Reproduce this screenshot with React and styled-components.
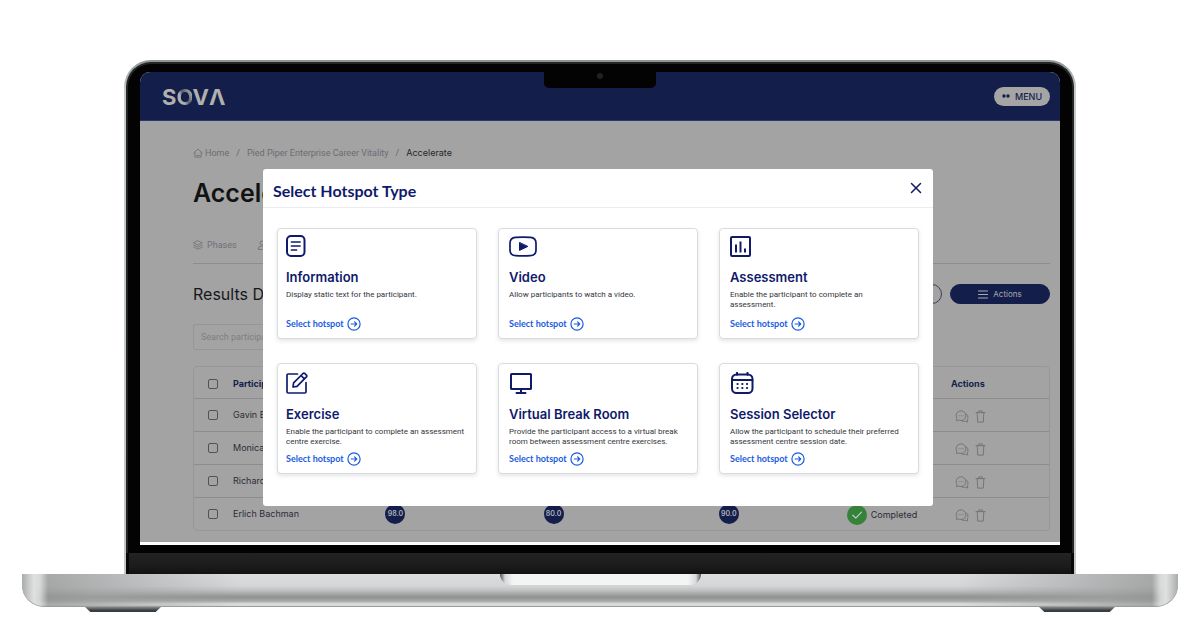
import React from "react";
import styled, { createGlobalStyle } from "styled-components";

const Global = createGlobalStyle`
  *, *::before, *::after { box-sizing: border-box; }
  body { margin: 0; background: #fff; font-family: Roboto, sans-serif; }
  button, input { font: inherit; color: inherit; margin: 0; }
  button { cursor: pointer; }
  h1, h2, h3, p { margin: 0; }
  svg { display: block; flex: none; }
`;

const heading = `font-family: Inter, sans-serif;`;

const Page = styled.main`
  padding: 60px 22px 4px;
`;
const Lid = styled.div`
  margin: 0 102px;
  padding: 2px;
  border-radius: 27px 27px 0 0;
  background: linear-gradient(#8f9392, #c9cccd 30px, #c4c6c8);
  padding-bottom: 0;
`;
const Bezel = styled.div`
  padding: 8px 12px;
  border: 2px solid #242626;
  border-bottom: 0;
  border-radius: 25px 25px 0 0;
  background: #030303;
`;
const Chin = styled.div`
  height: 21px;
  border: solid #080808;
  border-width: 0 3px;
  background: linear-gradient(#232323, #1b1c1b 60%, #121210);
`;
const Screen = styled.div`
  position: relative;
  padding-bottom: 3px;
  border-radius: 10px 10px 0 0;
  overflow: hidden;
  background: #fff;
`;
const Notch = styled.div`
  position: absolute;
  top: 0;
  left: 50%;
  transform: translateX(-50%);
  display: flex;
  justify-content: center;
  width: 112px;
  height: 16px;
  padding-top: 1px;
  border-radius: 0 0 5px 5px;
  background: #030303;
`;
const Camera = styled.span`
  width: 6px;
  height: 6px;
  border-radius: 50%;
  background: #1d2226;
`;

const Base = styled.div`
  display: flex;
  justify-content: center;
  height: 33px;
  border-bottom: 1px solid #9b9d9d;
  border-radius: 0 0 22px 22px;
  background:
    linear-gradient(90deg, #a9abab 0, #c6c8c8 6px, #dfe1e1 12px, rgba(215, 217, 217, 0.9) 18px, rgba(150, 152, 152, 0.75) 26px, rgba(160, 162, 162, 0.7) 70px, rgba(190, 192, 194, 0) 220px, rgba(190, 192, 194, 0) calc(100% - 220px), rgba(160, 162, 162, 0.7) calc(100% - 70px), rgba(150, 152, 152, 0.75) calc(100% - 26px), rgba(215, 217, 217, 0.9) calc(100% - 18px), #dfe1e1 calc(100% - 12px), #c6c8c8 calc(100% - 6px), #a9abab 100%),
    linear-gradient(#dcddde 0, #d3d5d7 12px, #bcbebe 17px, #8f9191 23px, #a5a7a7 27px, #dedfdf 30px, #cfd1d1 33px);
`;
const Lip = styled.div`
  width: 201px;
  height: 11px;
  border-radius: 0 0 11px 11px;
  background: linear-gradient(90deg, #4e5052, #d7d8d8 5px, #f3f5f5 13px, #f3f5f5 calc(100% - 13px), #d7d8d8 calc(100% - 5px), #4e5052);
`;
const Feet = styled.div`
  display: flex;
  justify-content: space-between;
  padding: 0 63px;
`;
const Foot = styled.span`
  width: 76px;
  height: 5px;
  background: linear-gradient(#858989, #3a3d42 70%);
  clip-path: polygon(0 0, 100% 0, 93% 100%, 7% 100%);
`;

const TopBar = styled.header`
  display: flex;
  align-items: center;
  justify-content: space-between;
  height: 49px;
  padding: 0 10px 0 22px;
  border-bottom: 1px solid #2c3767;
  background: #131e4a;
`;
const Logo = styled.a`
  ${heading}
  padding-top: 2px;
  color: #b0b0ac;
  font-size: 22px;
  line-height: 24px;
  font-weight: 700;
  text-decoration: none;
`;
const LogoRing = styled.span`
  background: linear-gradient(60deg, #b0b0ac 40%, #555b6c 55%, #a5a5a5 80%);
  background-clip: text;
  color: transparent;
`;
const MenuButton = styled.button`
  ${heading}
  display: flex;
  align-items: center;
  justify-content: center;
  gap: 5px;
  width: 56px;
  height: 19px;
  padding: 0;
  border: 0;
  border-radius: 10px;
  background: #a5a5a6;
  color: #131e4a;
  font-size: 9px;
  font-weight: 500;
`;

const Content = styled.section`
  padding: 26px 10px 11px 53px;
  background: #a3a3a3;
`;
const Breadcrumb = styled.nav`
  display: flex;
  align-items: center;
  gap: 7px;
  color: #63656a;
  font-size: 9px;
  line-height: 12px;
`;
const Crumb = styled.a`
  display: flex;
  align-items: center;
  gap: 2px;
  color: ${(p) => (p.$current ? "#24262d" : "#6b6d72")};
  font-family: ${(p) => (p.$current ? "Inter" : "Roboto")}, sans-serif;
  text-decoration: none;
`;
const Title = styled.h1`
  ${heading}
  margin-top: 19px;
  color: #111214;
  font-size: 25px;
  line-height: 30px;
  font-weight: 600;
`;
const Tabs = styled.nav`
  display: flex;
  gap: 20px;
  margin-top: 30px;
  padding-bottom: 11px;
  border-bottom: 1px solid #8d8d8f;
`;
const Tab = styled.a`
  display: flex;
  align-items: center;
  gap: 4px;
  color: #6e7074;
  font-size: 9px;
  line-height: 14px;
  text-decoration: none;
`;
const ResultsBar = styled.div`
  display: flex;
  align-items: center;
  gap: 8px;
  margin-top: 20px;
`;
const ResultsTitle = styled.h2`
  ${heading}
  flex: 1;
  color: #17181b;
  font-size: 16px;
  line-height: 20px;
  font-weight: 400;
`;
const PillButton = styled.button`
  ${heading}
  display: flex;
  align-items: center;
  justify-content: center;
  gap: 5px;
  width: 100px;
  height: 20px;
  padding: 0;
  border: 1px solid ${(p) => (p.$ghost ? "#3c4050" : "#131e4a")};
  border-radius: 10px;
  background: ${(p) => (p.$ghost ? "transparent" : "#131e4a")};
  color: #a9abb3;
  font-size: 8px;
`;
const Search = styled.input`
  display: block;
  width: 200px;
  height: 26px;
  margin-top: 20px;
  padding: 0 7px;
  border: 1px solid #969698;
  border-radius: 2px;
  background: transparent;
  font-size: 9px;
  &::placeholder { color: #7d7f83; opacity: 1; }
`;

const Table = styled.table`
  width: 100%;
  margin-top: 16px;
  border: 1px solid #979799;
  border-radius: 4px;
  border-collapse: separate;
  border-spacing: 0;
  table-layout: fixed;
  ${heading}
  font-size: 9px;
  line-height: 12px;
  color: #2b2d35;
`;
const Col = styled.col`
  width: ${(p) => p.$w};
`;
const HeadCell = styled.th`
  height: 32px;
  padding: 2px 0 0;
  border-bottom: 1px solid #8c8c8f;
  color: #131e4a;
  font-weight: 700;
  text-align: left;
`;
const Cell = styled.td`
  height: 33px;
  padding: ${(p) => (p.$status ? "2px 0 0 24px" : "0")};
  border-bottom: 1px solid #8c8c8f;
  text-align: ${(p) => (p.$center ? "center" : "left")};
  tr:last-child > & { height: 32px; border-bottom: 0; }
`;
const Tick = styled.input`
  appearance: none;
  display: block;
  width: 10px;
  height: 10px;
  margin: 0 0 0 14px;
  border: 1px solid #505259;
  border-radius: 2px;
`;
const Score = styled.span`
  display: inline-flex;
  align-items: center;
  justify-content: center;
  width: 20px;
  height: 20px;
  border-radius: 50%;
  background: #131e4a;
  color: #b3b4ba;
  font-size: 7px;
  font-weight: 600;
  vertical-align: middle;
`;
const Status = styled.span`
  display: flex;
  align-items: center;
  gap: 4px;
`;
const RowActions = styled.div`
  display: flex;
  align-items: center;
  gap: 6px;
  padding: 2px 0 0 4px;
`;
const IconButton = styled.button`
  display: flex;
  padding: 0;
  border: 0;
  background: none;
  color: ${(p) => p.$tone || "#707277"};
`;

const Overlay = styled.div`
  position: absolute;
  inset: 0;
  padding: 97px 127px 0 123px;
`;
const Dialog = styled.section`
  border-radius: 3px;
  background: #fff;
`;
const DialogHead = styled.header`
  display: flex;
  align-items: center;
  justify-content: space-between;
  height: 39px;
  padding: 0 11px 0 10px;
  border-bottom: 1px solid #ececee;
`;
const DialogTitle = styled.h2`
  padding-top: 6px;
  color: #0f1a6b;
  font-family: Lato, sans-serif;
  font-size: 16px;
  line-height: 20px;
  font-weight: 700;
`;
const CardIcon = styled.div`
  display: flex;
  align-items: center;
  height: 22px;
  margin-bottom: 9px;
  color: #0f1a6b;
`;
const Cards = styled.div`
  display: grid;
  grid-template-columns: repeat(3, 1fr);
  gap: 24px 21px;
  padding: 20px 14px 32px;
`;
const Card = styled.article`
  display: flex;
  flex-direction: column;
  height: 111px;
  padding: 6px 10px 7px;
  border: 1px solid #d9dbde;
  border-radius: 4px;
  background: #fff;
  box-shadow: 0 2px 4px rgba(30, 45, 60, 0.12);
  &:nth-child(3n + 1) { padding-left: 8px; }
  &:nth-child(n + 4) { padding-top: 8px; }
`;
const CardTitle = styled.h3`
  ${heading}
  color: #0f1a6b;
  font-size: 13px;
  line-height: 22px;
  font-weight: 600;
`;
const CardText = styled.p`
  margin-top: 2px;
  color: #33363c;
  font-size: 8px;
  line-height: 10px;
`;
const CardLink = styled.a`
  display: flex;
  align-items: center;
  gap: 3px;
  margin-top: auto;
  color: #1a5be0;
  font-family: Lato, sans-serif;
  font-size: 9px;
  line-height: 14px;
  font-weight: 700;
  text-decoration: none;
`;

const Svg = ({ w, h, box, sw = 2, children }) => (
  <svg width={w} height={h} viewBox={box || `0 0 ${w} ${h}`} fill="none" stroke="currentColor" strokeWidth={sw} strokeLinecap="round" strokeLinejoin="round" aria-hidden="true">
    {children}
  </svg>
);

const InfoIcon = () => (
  <Svg w={20} h={22}>
    <rect x="1" y="1" width="17.500" height="20" rx="4" />
    <path d="M5.500 7h8.500M5.500 11h8.500M5.500 15h5" strokeWidth="1.7" />
  </Svg>
);
const VideoIcon = () => (
  <Svg w={28} h={21}>
    <path d="M1 7C1 3 3 1.6 6.500 1.300Q14 .8 21.500 1.300C25 1.600 27 3 27 7v7c0 4-2 5.400-5.500 5.700Q14 20.200 6.500 19.700C3 19.400 1 18 1 14z" strokeWidth="1.7" />
    <path d="M10.500 6.800v7.600l8-3.800z" fill="currentColor" strokeWidth="1" />
  </Svg>
);
const ChartIcon = () => (
  <Svg w={21} h={21}>
    <rect x="1" y="1" width="19" height="19" rx="1" />
    <path d="M6 8.500v8M10.500 5.500v11M15 12.500v4" strokeLinecap="butt" />
  </Svg>
);
const EditIcon = () => (
  <Svg w={22} h={22} sw={1.7}>
    <path d="M11.500 2H2.200Q1 2 1 3.200V19.800Q1 21 2.200 21H18.800Q20 21 20 19.800V10.500" />
    <path d="M7 15l.6-4.200L17 1.500q.9-.8 1.800 0l1.600 1.600q.8.900 0 1.800L11 14.300zM15 3.500l3.400 3.400" />
  </Svg>
);
const MonitorIcon = () => (
  <Svg w={23} h={21}>
    <rect x="2" y="1" width="20" height="15" rx=".6" />
    <path d="M12 16v4M7.500 20h9" />
  </Svg>
);
const CalendarIcon = () => (
  <Svg w={24} h={22}>
    <rect x="2" y="2.500" width="20.500" height="18.500" rx="4.500" />
    <path d="M2 8h20.500" strokeWidth="1.800" />
    <path d="M7 .8v2M17.500 .8v2" />
    <path d="M7.500 12h.1M12.300 12h.1M17 12h.1M7.500 16h.1M12.300 16h.1M17 16h.1" strokeWidth="2.200" />
  </Svg>
);
const ArrowIcon = () => (
  <Svg w={14} h={14} sw={1.2}>
    <circle cx="7" cy="7" r="6.100" />
    <path d="M4.200 7h5.400M7.600 4.900L9.700 7 7.600 9.100" />
  </Svg>
);
const HomeIcon = () => (
  <Svg w={10} h={10} sw={0.8}>
    <path d="M.8 4.800L5 1l4.200 3.800M1.900 4.200v4.900h6.200V4.200M3.600 7.300q1.400 1 2.800 0" />
  </Svg>
);
const LayersIcon = () => (
  <Svg w={10} h={10} sw={0.8}>
    <path d="M5 .8L9.300 2.900 5 5 .7 2.900zM.7 5L5 7.100 9.300 5M.7 7.100L5 9.200l4.300-2.100" />
  </Svg>
);
const UserIcon = () => (
  <Svg w={10} h={10} sw={0.8}>
    <circle cx="5" cy="3" r="2" />
    <path d="M1 9q0-3 4-3t4 3z" />
  </Svg>
);
const LinesIcon = () => (
  <Svg w={10} h={9} sw={1}>
    <path d="M.5 1h9M.5 4.500h9M.5 8h9" />
  </Svg>
);
const CheckIcon = () => (
  <Svg w={20} h={20} sw={1.2}>
    <circle cx="10" cy="10" r="10" fill="#35823b" stroke="none" />
    <path d="M5.800 10.200l3 2.900 5.600-5.900" stroke="#c0cdc1" />
  </Svg>
);
const ChatIcon = () => (
  <Svg w={14} h={13} sw={0.9}>
    <path d="M1.500 10.300l.3-2A4.900 4.900 0 1 1 4 10.200z" />
    <path d="M11.300 3.700q2.200 1.800 1.700 4.500l-.6 1.200.3 2.600-2.300-.8q-2.300.9-4-.5M4 5.700h.1M6 5.700h.1M8 5.700h.1" />
  </Svg>
);
const TrashIcon = () => (
  <Svg w={11} h={13} sw={0.9}>
    <path d="M1 2.600h9M3.800 2.400V.9h3.400v1.500M2.200 2.800l.5 9.300h5.600l.5-9.300" />
  </Svg>
);
const CloseIcon = () => (
  <Svg w={12} h={12} sw={1.5}>
    <path d="M1.500 1.500l9 9M10.500 1.500l-9 9" />
  </Svg>
);
const DotsIcon = () => (
  <Svg w={8} h={4} sw={0}>
    <circle cx="2" cy="2" r="1.700" fill="currentColor" />
    <circle cx="6" cy="2" r="1.700" fill="currentColor" />
  </Svg>
);

const hotspots = [
  { title: "Information", text: "Display static text for the participant.", Icon: InfoIcon },
  { title: "Video", text: "Allow participants to watch a video.", Icon: VideoIcon },
  { title: "Assessment", text: "Enable the participant to complete an assessment.", Icon: ChartIcon },
  { title: "Exercise", text: "Enable the participant to complete an assessment centre exercise.", Icon: EditIcon },
  { title: "Virtual Break Room", text: "Provide the participant access to a virtual break room between assessment centre exercises.", Icon: MonitorIcon },
  { title: "Session Selector", text: "Allow the participant to schedule their preferred assessment centre session date.", Icon: CalendarIcon },
];

const people = [
  { name: "Gavin Belson" },
  { name: "Monica Hall" },
  { name: "Richard Hendricks" },
  { name: "Erlich Bachman", scores: ["98.0", "80.0", "90.0"], status: "Completed" },
];

const columns = ["39px", "10%", "18%", "19%", "22%", "15%", "98px"];

function Results() {
  return (
    <Table>
      <colgroup>
        {columns.map((w, i) => <Col key={i} $w={w} />)}
      </colgroup>
      <thead>
        <tr>
          <HeadCell><Tick type="checkbox" aria-label="Select all participants" /></HeadCell>
          <HeadCell scope="col">Participant</HeadCell>
          <HeadCell /><HeadCell /><HeadCell /><HeadCell />
          <HeadCell scope="col">Actions</HeadCell>
        </tr>
      </thead>
      <tbody>
        {people.map(({ name, scores, status }) => (
          <tr key={name}>
            <Cell><Tick type="checkbox" aria-label={`Select ${name}`} /></Cell>
            <Cell>{name}</Cell>
            {[0, 1, 2].map((i) => (
              <Cell key={i} $center>{scores && <Score>{scores[i]}</Score>}</Cell>
            ))}
            <Cell $status>{status && <Status><CheckIcon />{status}</Status>}</Cell>
            <Cell>
              <RowActions>
                <IconButton type="button" aria-label={`Message ${name}`}><ChatIcon /></IconButton>
                <IconButton type="button" aria-label={`Delete ${name}`}><TrashIcon /></IconButton>
              </RowActions>
            </Cell>
          </tr>
        ))}
      </tbody>
    </Table>
  );
}

function HotspotDialog() {
  return (
    <Overlay>
      <Dialog role="dialog" aria-labelledby="dialog-title">
        <DialogHead>
          <DialogTitle id="dialog-title">Select Hotspot Type</DialogTitle>
          <IconButton type="button" aria-label="Close" $tone="#0f1a6b"><CloseIcon /></IconButton>
        </DialogHead>
        <Cards>
          {hotspots.map(({ title, text, Icon }) => (
            <Card key={title}>
              <CardIcon><Icon /></CardIcon>
              <CardTitle>{title}</CardTitle>
              <CardText>{text}</CardText>
              <CardLink href="#">Select hotspot<ArrowIcon /></CardLink>
            </Card>
          ))}
        </Cards>
      </Dialog>
    </Overlay>
  );
}

export default function App() {
  return (
    <Page>
      <Global />
      <Lid>
        <Bezel>
          <Screen>
            <TopBar>
              <Logo href="#" aria-label="Sova">S<LogoRing>O</LogoRing>VΛ</Logo>
              <MenuButton type="button"><DotsIcon />MENU</MenuButton>
            </TopBar>
            <Content>
              <Breadcrumb aria-label="Breadcrumb">
                <Crumb href="#"><HomeIcon />Home</Crumb>
                <span>/</span>
                <Crumb href="#">Pied Piper Enterprise Career Vitality</Crumb>
                <span>/</span>
                <Crumb href="#" $current>Accelerate</Crumb>
              </Breadcrumb>
              <Title>Accelerate</Title>
              <Tabs>
                <Tab href="#"><LayersIcon />Phases</Tab>
                <Tab href="#" aria-label="Participants"><UserIcon /></Tab>
              </Tabs>
              <ResultsBar>
                <ResultsTitle>Results Data</ResultsTitle>
                <PillButton type="button" aria-label="Filter" $ghost />
                <PillButton type="button"><LinesIcon />Actions</PillButton>
              </ResultsBar>
              <Search type="search" placeholder="Search participants" aria-label="Search participants" />
              <Results />
            </Content>
            <HotspotDialog />
            <Notch><Camera /></Notch>
          </Screen>
        </Bezel>
        <Chin />
      </Lid>
      <Base><Lip /></Base>
      <Feet><Foot /><Foot /></Feet>
    </Page>
  );
}
